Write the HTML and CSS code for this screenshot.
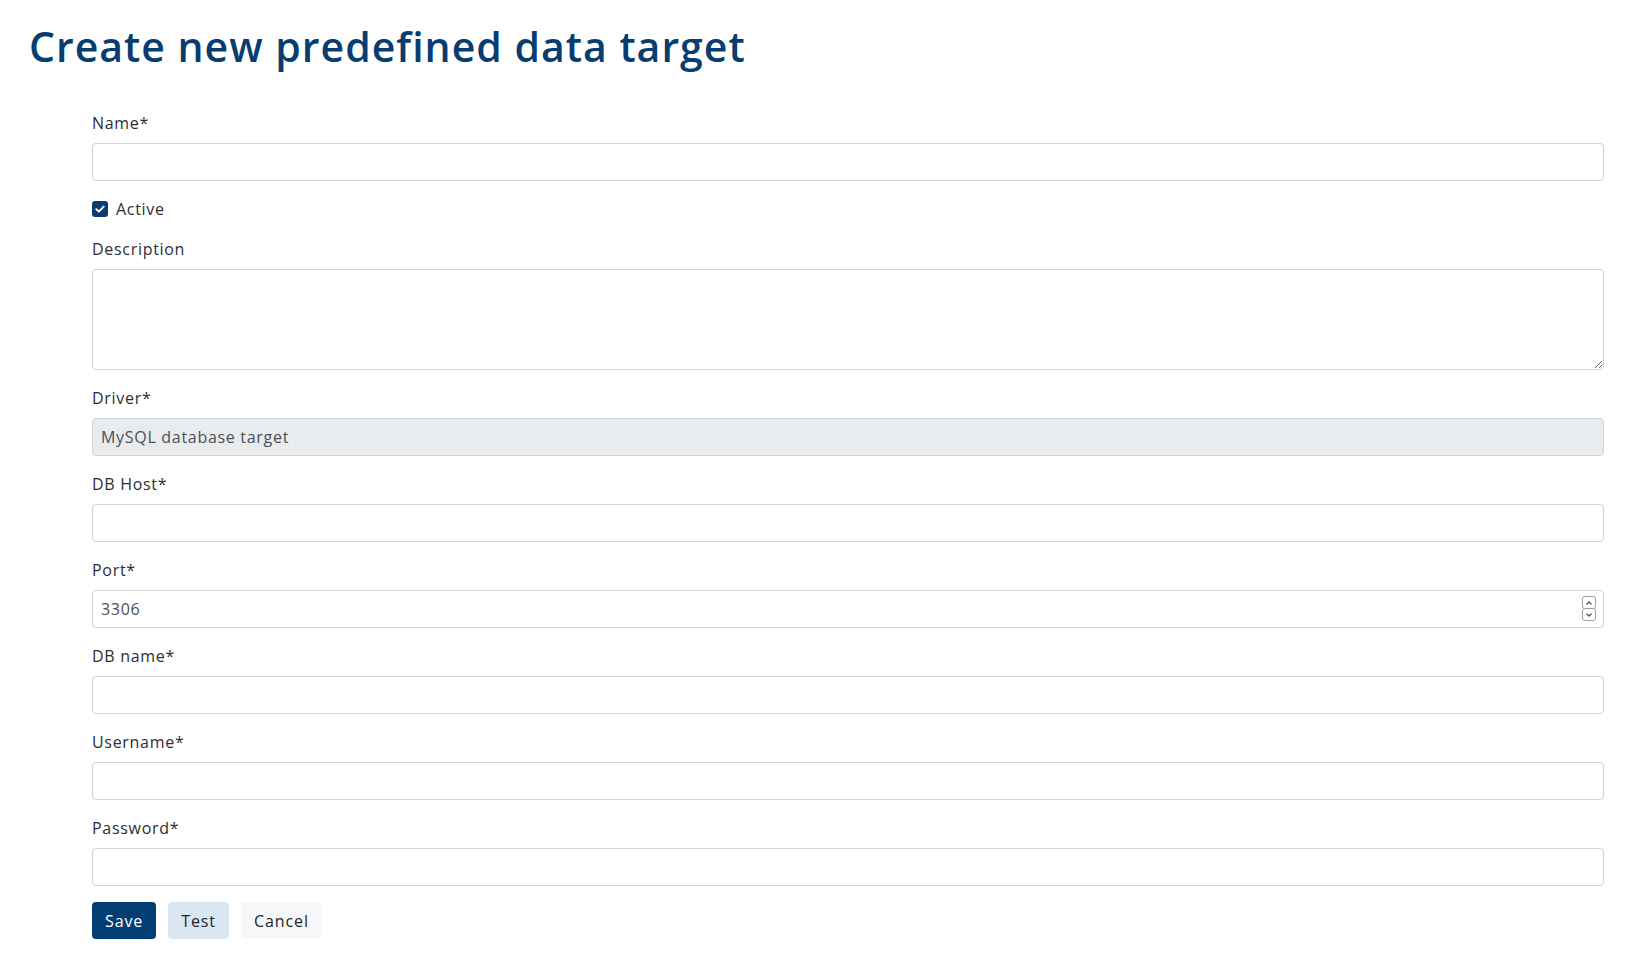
FILE: index.html
```html
<!DOCTYPE html>
<html lang="en">
<head>
<meta charset="utf-8">
<title>Create new predefined data target</title>
<link rel="stylesheet" href="styles.css">
</head>
<body>
<div class="page">
  <h1 class="title">Create new predefined data target</h1>
  <form class="form">
    <div class="field">
      <label class="label">Name*</label>
      <input class="input" type="text">
    </div>
    <div class="field check-row">
      <span class="check"><svg viewBox="0 0 16 16" width="16" height="16"><path d="M4.3 8.2 L6.8 10.6 L11.7 5.6" fill="none" stroke="#fff" stroke-width="2" stroke-linecap="round" stroke-linejoin="round"/></svg></span>
      <span class="check-label">Active</span>
    </div>
    <div class="field">
      <label class="label">Description</label>
      <textarea class="input textarea"></textarea>
    </div>
    <div class="field">
      <label class="label">Driver*</label>
      <input class="input disabled" type="text" value="MySQL database target" disabled>
    </div>
    <div class="field">
      <label class="label">DB Host*</label>
      <input class="input" type="text">
    </div>
    <div class="field">
      <label class="label">Port*</label>
      <div class="num-wrap">
        <input class="input" type="text" value="3306">
        <span class="spinner">
          <span class="spin-btn"><svg viewBox="0 0 10 8" width="10" height="8"><path d="M2.5 5.5 L5 3 L7.5 5.5" fill="none" stroke="#555" stroke-width="1.3"/></svg></span>
          <span class="spin-btn"><svg viewBox="0 0 10 8" width="10" height="8"><path d="M2.5 2.5 L5 5 L7.5 2.5" fill="none" stroke="#555" stroke-width="1.3"/></svg></span>
        </span>
      </div>
    </div>
    <div class="field">
      <label class="label">DB name*</label>
      <input class="input" type="text">
    </div>
    <div class="field">
      <label class="label">Username*</label>
      <input class="input" type="text">
    </div>
    <div class="field">
      <label class="label">Password*</label>
      <input class="input" type="password">
    </div>
    <div class="actions">
      <button type="button" class="btn btn-primary">Save</button>
      <button type="button" class="btn btn-light-blue">Test</button>
      <button type="button" class="btn btn-light">Cancel</button>
    </div>
  </form>
</div>
</body>
</html>
```
FILE: styles.css
```css
html, body {
  margin: 0;
  padding: 0;
  background: #fff;
}
body {
  font-family: "Open Sans", "Liberation Sans", sans-serif;
  font-size: 16px;
  line-height: 24px;
  letter-spacing: 0.7px;
  color: #2b2f33;
}
.page {
  padding: 21px 43px 0 29px;
}
.title {
  margin: 0 0 40px 0;
  font-size: 41px;
  line-height: 50px;
  font-weight: 600;
  letter-spacing: 1px;
  color: #073d70;
}
.form {
  margin-left: 63px;
}
.field {
  margin-bottom: 16px;
}
.label {
  display: block;
  margin-bottom: 8px;
  line-height: 24px;
}
.input {
  display: block;
  width: 100%;
  box-sizing: border-box;
  height: 38px;
  padding: 6px 8px;
  border: 1px solid #ced4da;
  border-radius: 4px;
  font-family: inherit;
  font-size: 16px;
  letter-spacing: 0.7px;
  color: #495057;
  background: #fff;
  outline: none;
}
.input.disabled {
  background: #e9ecef;
  color: #495057;
}
.textarea {
  height: 101px;
  resize: vertical;
}
.check-row {
  display: flex;
  align-items: center;
  height: 24px;
}
.check {
  width: 16px;
  height: 16px;
  border-radius: 3px;
  background: #073d70;
  display: inline-flex;
  margin-right: 8px;
}
.check svg {
  display: block;
}
.num-wrap {
  position: relative;
}
.spinner {
  position: absolute;
  right: 8px;
  top: 6px;
  display: flex;
  flex-direction: column;
}
.spin-btn {
  width: 12px;
  height: 11px;
  border: 1px solid #a0a0a0;
  border-radius: 3px;
  display: flex;
  align-items: center;
  justify-content: center;
  background: #fff;
}
.spin-btn + .spin-btn {
  margin-top: -1px;
}
.actions {
  display: flex;
  gap: 12px;
}
.btn {
  height: 37px;
  padding: 0 13px;
  border: none;
  border-radius: 4px;
  font-family: inherit;
  font-size: 16px;
  letter-spacing: 0.9px;
  cursor: pointer;
}
.btn-primary {
  background: #023e73;
  color: #fff;
}
.btn-light-blue {
  background: #dae6f2;
  color: #212529;
}
.btn-light {
  background: #f5f7f9;
  color: #212529;
}
```
